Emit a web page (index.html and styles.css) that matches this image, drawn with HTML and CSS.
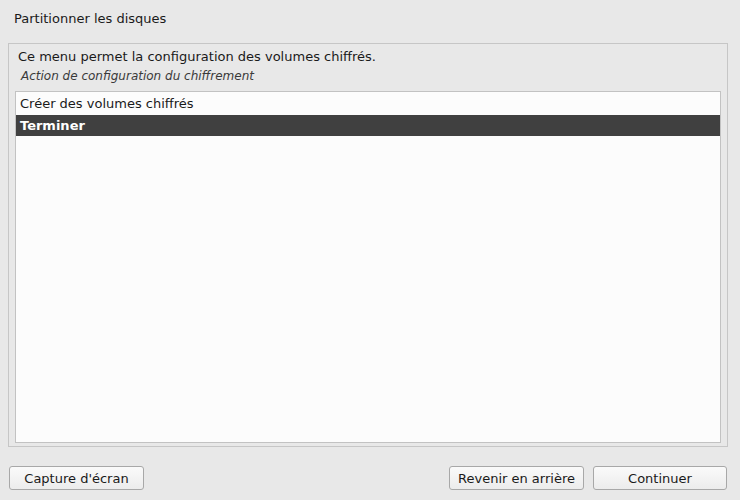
FILE: index.html
```html
<!DOCTYPE html>
<html lang="fr">
<head>
<meta charset="utf-8">
<title>Partitionner les disques</title>
<link rel="stylesheet" href="styles.css">
</head>
<body>
<div class="page">
  <header class="title">Partitionner les disques</header>
  <section class="frame">
    <p class="intro">Ce menu permet la configuration des volumes chiffrés.</p>
    <p class="prompt">Action de configuration du chiffrement</p>
    <ul class="list">
      <li class="item">Créer des volumes chiffrés</li>
      <li class="item selected">Terminer</li>
    </ul>
  </section>
  <footer class="buttons">
    <button class="btn btn-capture">Capture d'écran</button>
    <div class="spacer"></div>
    <button class="btn btn-back">Revenir en arrière</button>
    <button class="btn btn-continue">Continuer</button>
  </footer>
</div>
</body>
</html>
```

FILE: styles.css
```css
html, body {
  margin: 0;
  padding: 0;
  background: #e8e8e8;
}
body {
  font-family: "DejaVu Sans", sans-serif;
  font-size: 13px;
  color: #1a1a1a;
  width: 740px;
  height: 500px;
  overflow: hidden;
}
.page {
  display: flex;
  flex-direction: column;
  height: 500px;
}
.title {
  height: 43px;
  box-sizing: border-box;
  padding: 11px 0 0 14px;
  line-height: 16px;
}
.frame {
  margin: 0 12px 0 8px;
  height: 404px;
  box-sizing: border-box;
  border: 1px solid #c6c6c6;
  padding: 5px 6px 3px 6px;
  display: flex;
  flex-direction: column;
}
.intro {
  margin: 0 0 0 3px;
  line-height: 16px;
}
.prompt {
  margin: 3px 0 0 6px;
  font-style: italic;
  font-size: 12px;
  color: #3a3a3a;
  line-height: 16px;
}
.list {
  list-style: none;
  margin: 7px 0 0 0;
  padding: 0;
  flex: 1;
  background: #fcfcfc;
  border: 1px solid #c2c2c2;
}
.item {
  height: 23px;
  line-height: 23px;
  padding-left: 4px;
}
.item.selected {
  background: #404040;
  color: #ffffff;
  font-weight: bold;
  height: 21px;
  line-height: 21px;
}
.buttons {
  display: flex;
  align-items: flex-start;
  padding: 19px 13px 0 9px;
  gap: 9px;
}
.spacer { flex: 1; }
.btn {
  font-family: "DejaVu Sans", sans-serif;
  font-size: 13px;
  color: #1a1a1a;
  height: 24px;
  width: 135px;
  box-sizing: border-box;
  border: 1px solid #a8a8a8;
  border-radius: 3px;
  background: linear-gradient(#fafafa, #ececec);
  padding: 0;
}
.btn-continue { width: 134px; }
```
